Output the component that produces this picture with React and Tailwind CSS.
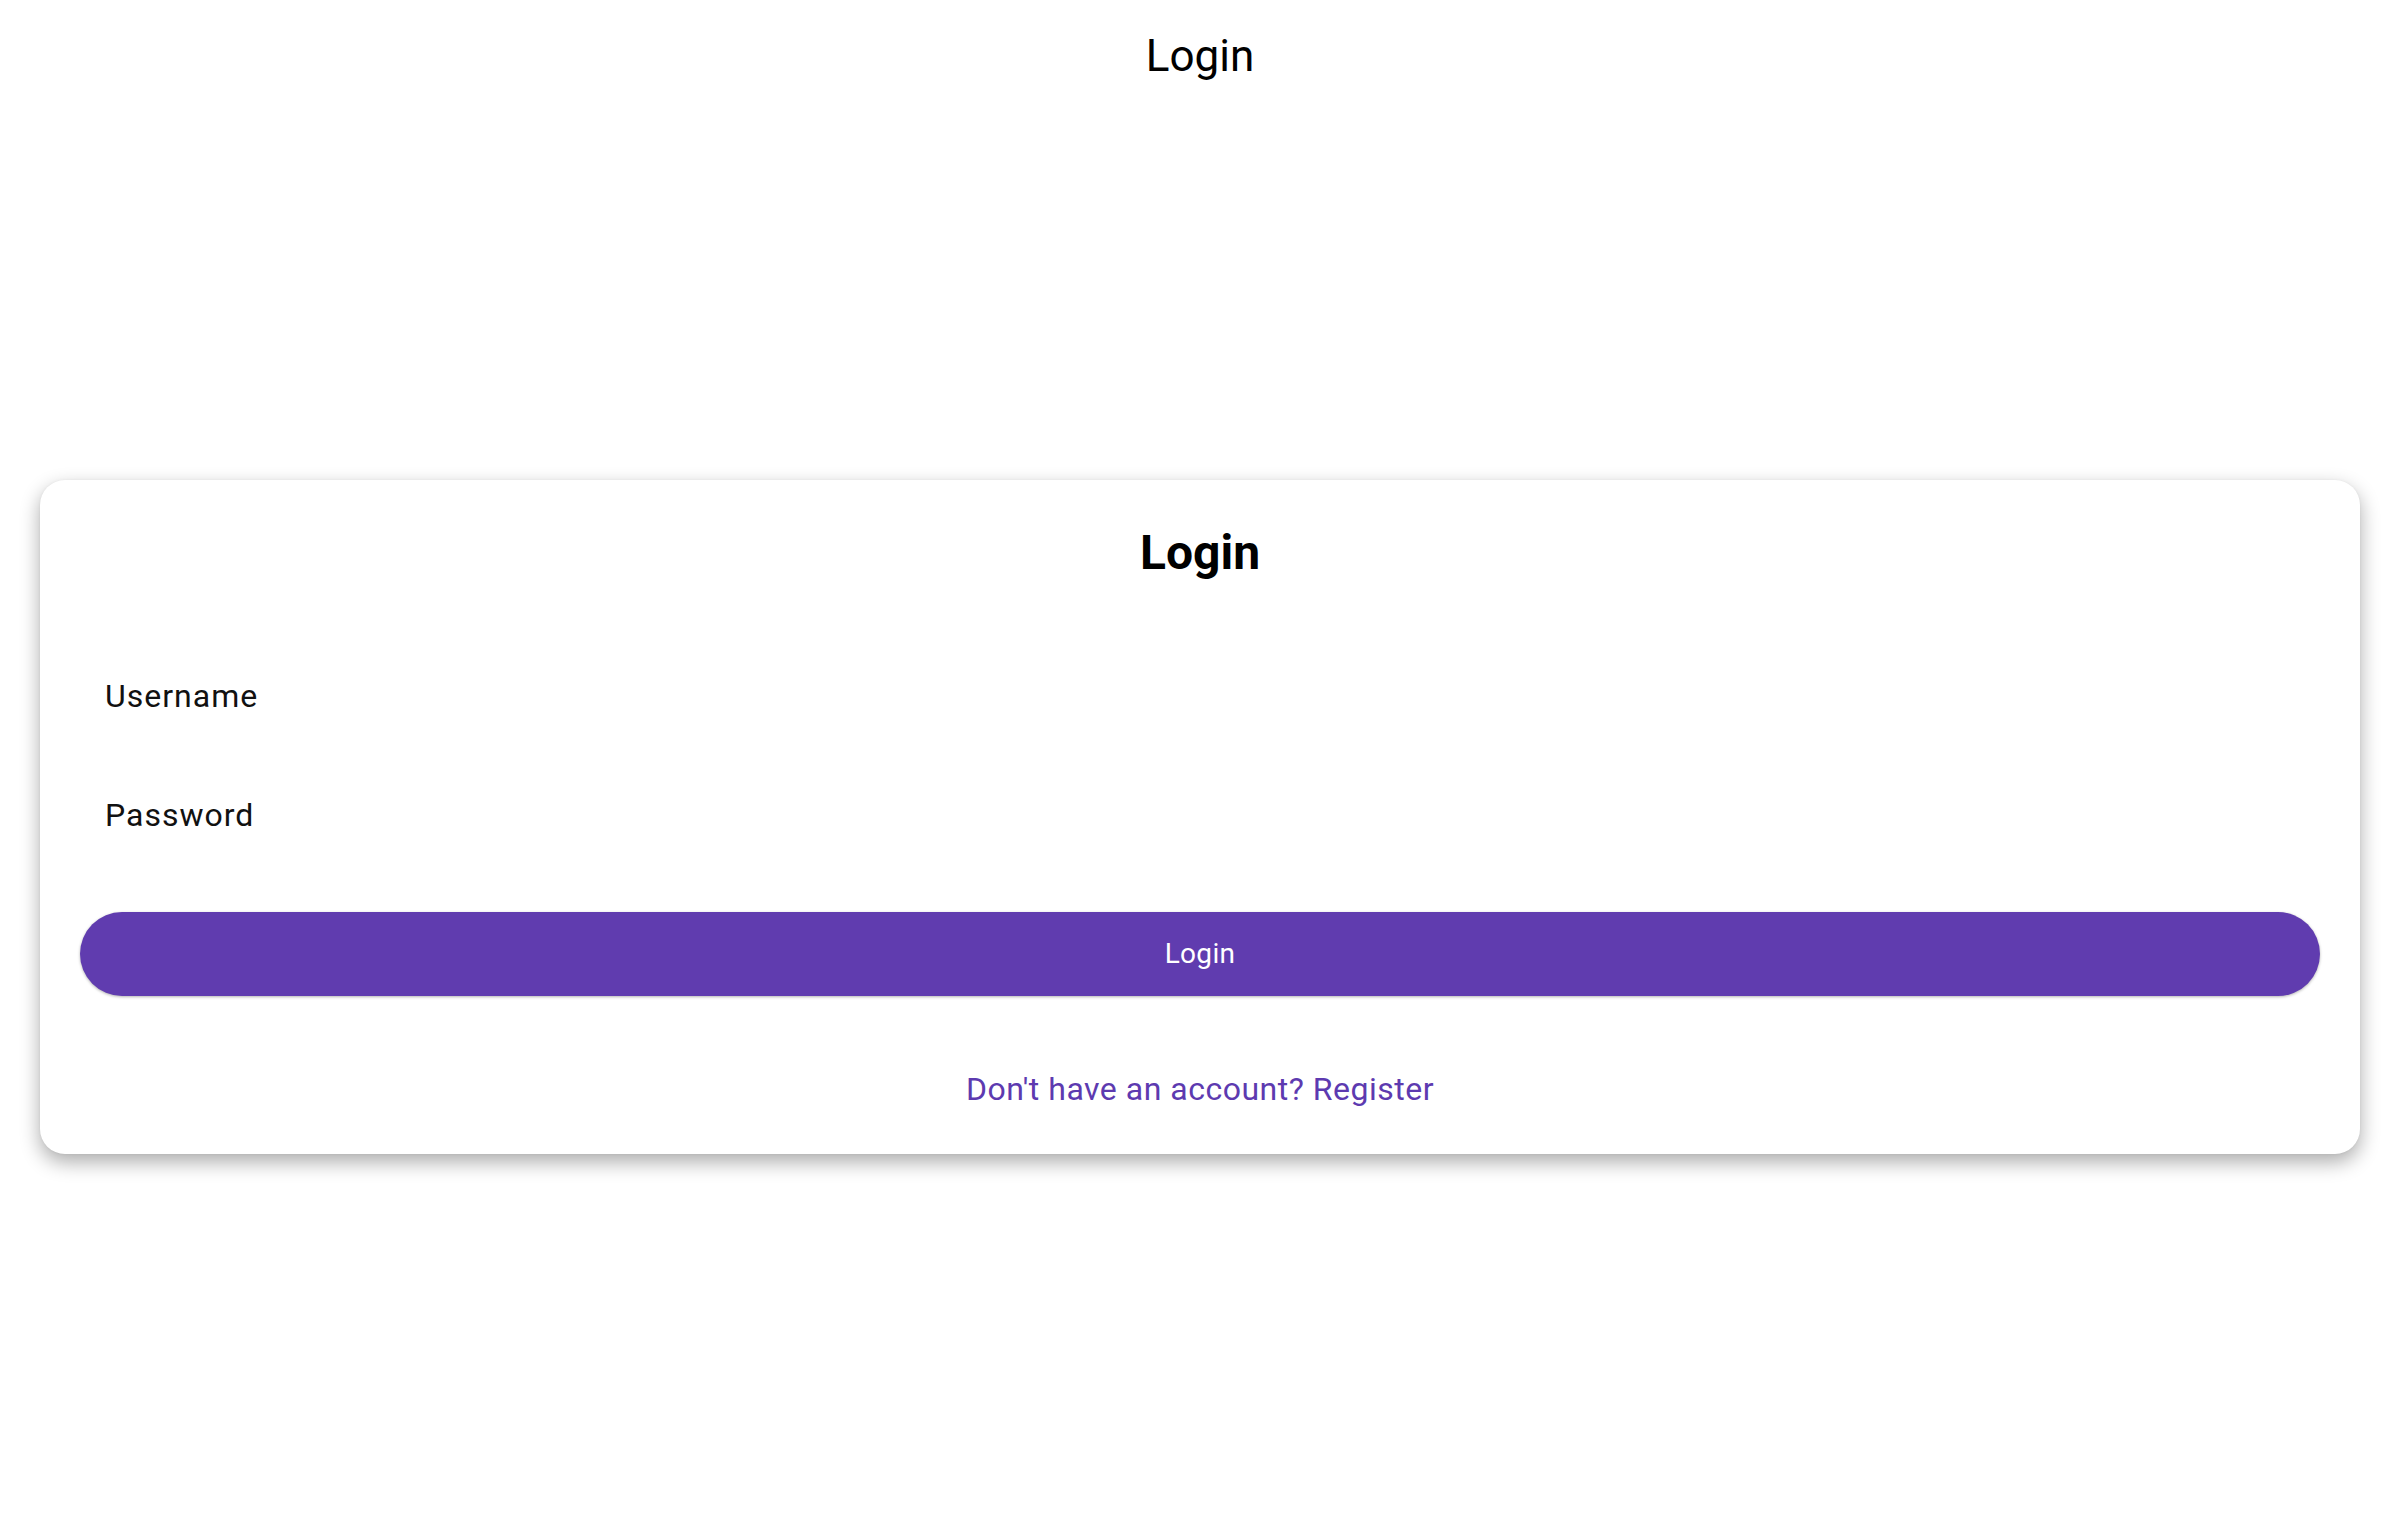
export default function App() {
  return (
    <div
      className="flex h-[1522px] w-full flex-col bg-white text-black"
      style={{ fontFamily: "Roboto, 'Noto Sans', sans-serif" }}
    >
      <header className="flex h-[112px] shrink-0 items-center justify-center">
        <h1 className="text-[44px] font-normal leading-[56px] text-[#000]">Login</h1>
      </header>
      <main className="flex flex-1 items-center px-[40px] pb-0">
        <div className="w-full rounded-[25px] bg-white px-[40px] pt-[45px] pb-[45px] shadow-[0_8px_20px_rgba(0,0,0,0.33),0_0_3px_rgba(0,0,0,0.05)]">
          <h2 className="text-center text-[48px] font-bold leading-[56px]">Login</h2>
          <div className="mt-[95px] flex flex-col">
            <label className="block h-[40px] px-[25px] text-[32px] leading-[40px] tracking-[1px] text-[#111]">
              Username
            </label>
            <label className="mt-[79px] block h-[40px] px-[25px] text-[32px] leading-[40px] tracking-[1px] text-[#111]">
              Password
            </label>
          </div>
          <button className="mt-[77px] flex h-[84px] w-full items-center justify-center rounded-full bg-[#603CAF] text-[28px] font-normal tracking-[0.3px] text-white shadow-[0_1px_3px_rgba(0,0,0,0.3)]">
            Login
          </button>
          <div className="mt-[73px] text-center text-[32px] leading-[40px] tracking-[0.5px] text-[#5D3AB0]">
            Don't have an account? Register
          </div>
        </div>
      </main>
    </div>
  );
}
